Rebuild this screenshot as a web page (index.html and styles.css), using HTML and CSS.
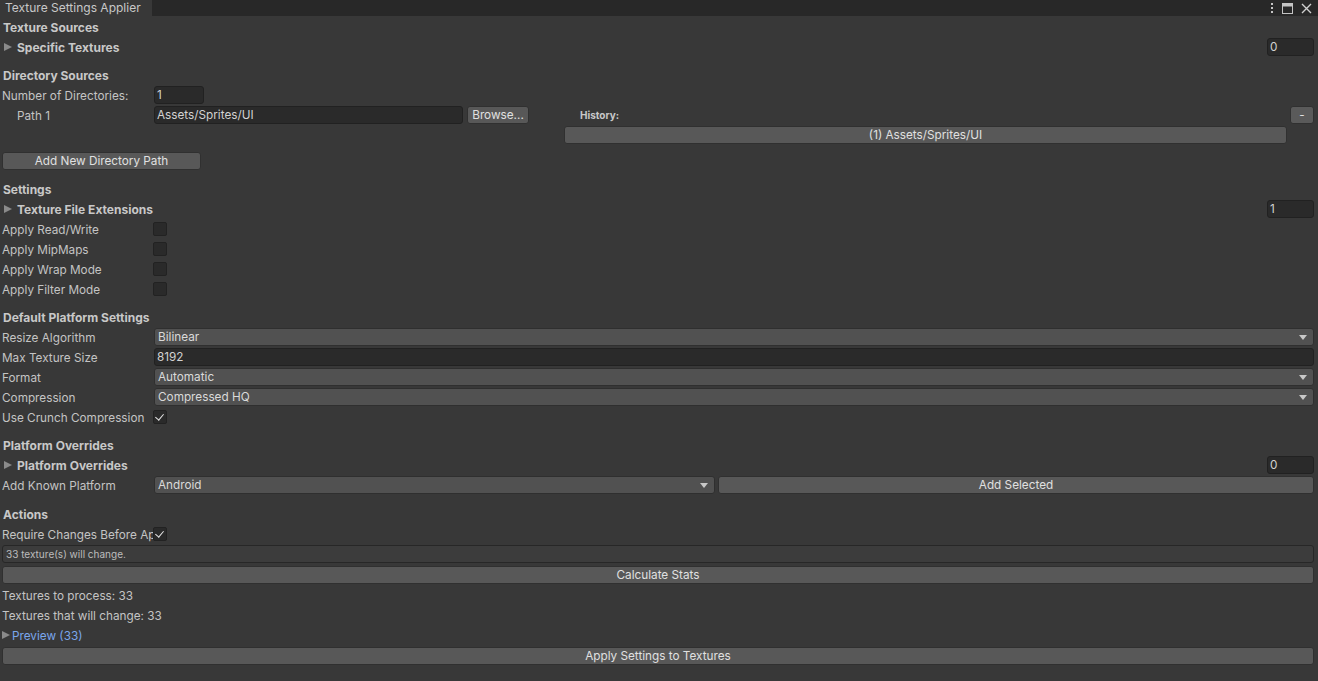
FILE: index.html
```html
<!DOCTYPE html>
<html>
<head>
<meta charset="utf-8">
<link rel="stylesheet" href="styles.css">
</head>
<body>
<div class="tabbar">
  <div class="tab">Texture Settings Applier</div>
  <div class="tab-icons">
    <svg width="4" height="12" viewBox="0 0 4 12"><rect x="1" y="1" width="2" height="2" fill="#c4c4c4"/><rect x="1" y="5" width="2" height="2" fill="#c4c4c4"/><rect x="1" y="9" width="2" height="2" fill="#c4c4c4"/></svg>
    <svg width="11" height="11" viewBox="0 0 11 11"><rect x="0.5" y="0.5" width="10" height="10" fill="none" stroke="#c4c4c4"/><rect x="0.5" y="0.5" width="10" height="3" fill="#c4c4c4"/></svg>
    <svg width="11" height="11" viewBox="0 0 11 11"><path d="M1 1 L10 10 M10 1 L1 10" stroke="#d0d0d0" stroke-width="1.4"/></svg>
  </div>
</div>
<div class="content">
  <div class="row header">Texture Sources</div>
  <div class="row">
    <span class="arrow"></span><span class="fold-label">Specific Textures</span>
    <span class="spacer"></span>
    <div class="field int">0</div>
  </div>

  <div class="row header gap">Directory Sources</div>
  <div class="row">
    <span class="label">Number of Directories:</span>
    <div class="field num">1</div>
  </div>
  <div class="dir">
    <div class="dir-left">
      <div class="row">
        <span class="label indent">Path 1</span>
        <div class="field path">Assets/Sprites/UI</div>
        <div class="btn browse">Browse...</div>
      </div>
    </div>
    <div class="dir-right">
      <div class="row">
        <span class="history">History:</span>
        <span class="spacer"></span>
        <div class="btn minus">-</div>
      </div>
      <div class="row">
        <div class="btn hist-item">(1) Assets/Sprites/UI</div>
      </div>
    </div>
  </div>
  <div class="row addrow">
    <div class="btn add">Add New Directory Path</div>
  </div>

  <div class="row header gap">Settings</div>
  <div class="row">
    <span class="arrow"></span><span class="fold-label">Texture File Extensions</span>
    <span class="spacer"></span>
    <div class="field int">1</div>
  </div>
  <div class="row"><span class="label">Apply Read/Write</span><span class="check"></span></div>
  <div class="row"><span class="label">Apply MipMaps</span><span class="check"></span></div>
  <div class="row"><span class="label">Apply Wrap Mode</span><span class="check"></span></div>
  <div class="row"><span class="label">Apply Filter Mode</span><span class="check"></span></div>

  <div class="row header gap">Default Platform Settings</div>
  <div class="row"><span class="label">Resize Algorithm</span><div class="dropdown">Bilinear</div></div>
  <div class="row"><span class="label">Max Texture Size</span><div class="field wide">8192</div></div>
  <div class="row"><span class="label">Format</span><div class="dropdown">Automatic</div></div>
  <div class="row"><span class="label">Compression</span><div class="dropdown">Compressed HQ</div></div>
  <div class="row"><span class="label">Use Crunch Compression</span><span class="check on"></span></div>

  <div class="row header gap">Platform Overrides</div>
  <div class="row">
    <span class="arrow"></span><span class="fold-label">Platform Overrides</span>
    <span class="spacer"></span>
    <div class="field int">0</div>
  </div>
  <div class="row">
    <span class="label">Add Known Platform</span>
    <div class="dropdown android">Android</div>
    <div class="btn addsel">Add Selected</div>
  </div>

  <div class="row header gap9">Actions</div>
  <div class="row"><span class="label">Require Changes Before Apply</span><span class="check on"></span></div>
  <div class="helpbox">33 texture(s) will change.</div>
  <div class="row btnrow"><div class="btn full">Calculate Stats</div></div>
  <div class="row"><span class="plain">Textures to process: 33</span></div>
  <div class="row"><span class="plain">Textures that will change: 33</span></div>
  <div class="row"><span class="arrow small"></span><span class="link">Preview (33)</span></div>
  <div class="row btnrow2"><div class="btn full">Apply Settings to Textures</div></div>
</div>
</body>
</html>
```

FILE: styles.css
```css
* { box-sizing: border-box; }
html, body { margin: 0; padding: 0; }
body {
  background: #383838;
  color: #c4c4c4;
  font-family: Inter, "Noto Sans", "Liberation Sans", sans-serif;
  font-size: 11.75px;
  width: 1318px;
  height: 681px;
  overflow: hidden;
}
.tabbar {
  height: 16px;
  background: #282828;
  display: flex;
  align-items: stretch;
}
.tab {
  width: 152px;
  background: #383838;
  padding-left: 5px;
  line-height: 16px;
  color: #c8c8c8;
  font-size: 12px;
}
.tab-icons {
  margin-left: auto;
  display: flex;
  align-items: center;
  gap: 8px;
  padding-right: 6px;
}
.content {
  padding: 1px 4px 0 2px;
}
.row {
  height: 20px;
  display: flex;
  align-items: center;
}
.header {
  font-weight: bold;
  font-size: 12px;
  color: #c8c8c8;
  padding-left: 1px;
}
.gap { margin-top: 8px; }
.gap9 { margin-top: 9px; }
.spacer { flex: 1; }
.label {
  width: 152px;
  flex: none;
  white-space: nowrap;
  overflow: hidden;
  padding-top: 2px;
}
.plain, .link { padding-top: 2px; }
.label.indent { padding-left: 15px; }
.arrow {
  width: 0; height: 0;
  border-left: 8px solid #8a8a8a;
  border-top: 4.5px solid transparent;
  border-bottom: 4.5px solid transparent;
  margin-left: 2px;
  margin-right: 5px;
}
.arrow.small { margin-left: 0; margin-right: 2px; }
.fold-label { font-weight: bold; font-size: 12px; color: #c8c8c8; }
.link { color: #7aa6ec; }
.field {
  height: 18px;
  background: #2a2a2a;
  border: 1px solid #212121;
  border-radius: 3px;
  padding-left: 2px;
  line-height: 17px;
  color: #d2d2d2;
}
.field.int { width: 47px; }
.field.num { width: 50px; }
.field.path { width: 309px; }
.field.wide { flex: 1; }
.btn {
  height: 18px;
  background: #585858;
  border: 1px solid #303030;
  border-radius: 3px;
  line-height: 17px;
  text-align: center;
  color: #e0e0e0;
}
.browse { width: 62px; margin-left: 4px; }
.dir { display: flex; }
.dir-left { width: 562px; }
.dir-right { flex: 1; }
.history {
  font-weight: bold;
  font-size: 10px;
  padding-left: 16px;
  color: #c8c8c8;
}
.minus { width: 24px; background: #5a5a5a; }
.hist-item { width: 723px; margin-top: -1px; }
.addrow { margin-top: 6px; }
.add { width: 199px; }
.check {
  width: 14px; height: 14px;
  background: #2a2a2a;
  border: 1px solid #222;
  border-radius: 2px;
  margin-left: -1px;
  position: relative;
}
.check.on::after {
  content: "";
  position: absolute;
  left: 3px; top: 1px;
  width: 4px; height: 7px;
  border-right: 1.6px solid #e6e6e6;
  border-bottom: 1.6px solid #e6e6e6;
  transform: rotate(40deg);
}
.dropdown {
  flex: 1;
  height: 18px;
  background: #515151;
  border: 1px solid #2f2f2f;
  border-radius: 3px;
  padding-left: 3px;
  line-height: 17px;
  color: #dadada;
  position: relative;
}
.dropdown::after {
  content: "";
  position: absolute;
  right: 6px; top: 6px;
  width: 0; height: 0;
  border-top: 5px solid #c8c8c8;
  border-left: 4px solid transparent;
  border-right: 4px solid transparent;
}
.dropdown.android { flex: none; width: 561px; }
.addsel { flex: 1; margin-left: 3px; }
.helpbox {
  height: 18px;
  margin-top: 1px;
  background: #3c3c3c;
  border: 1px solid #272727;
  border-radius: 3px;
  font-size: 10px;
  line-height: 16px;
  padding-left: 3px;
  color: #bdbdbd;
}
.btnrow { margin-top: 2px; }
.btn.full { flex: 1; }
.btnrow2 { margin-top: 1px; }
```
